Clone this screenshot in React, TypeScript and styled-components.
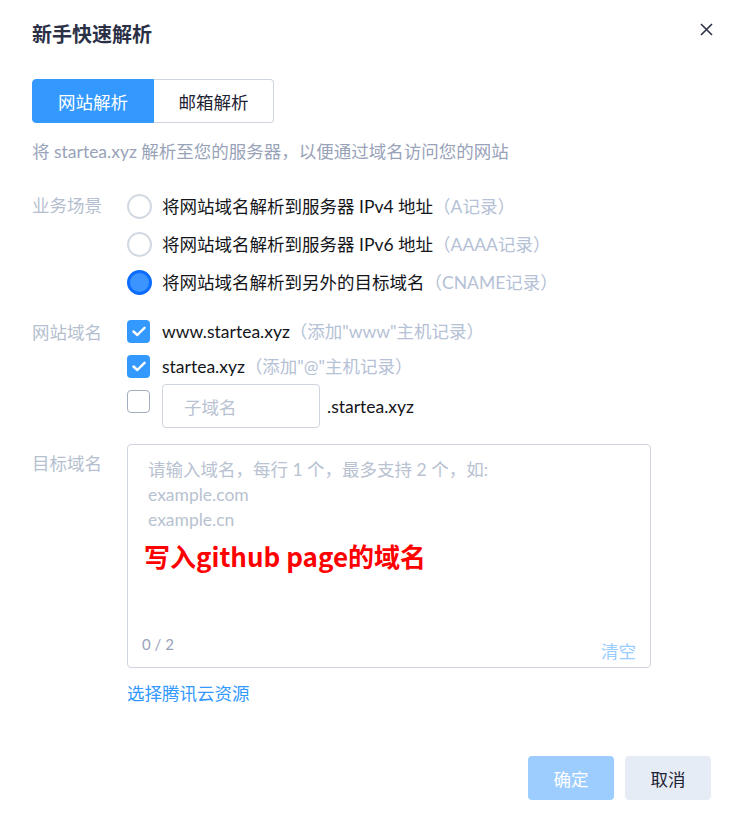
import React from "react";
import styled, { createGlobalStyle } from "styled-components";

const Global = createGlobalStyle`
  html, body { margin: 0; padding: 0; background: #fff; }
  body { font-family: Lato, "Noto Sans CJK SC", sans-serif; -webkit-font-smoothing: antialiased; }
  * { box-sizing: border-box; }
`;

const Dialog = styled.div`
  width: 734px;
  height: 818px;
  background: #fff;
  padding: 20px 23px 0 32px;
  display: flex;
  flex-direction: column;
  font-size: 17.5px;
  color: #13151a;
`;

const Header = styled.div`
  display: flex;
  justify-content: space-between;
  align-items: center;
  height: 28px;
`;

const Title = styled.h1`
  margin: 0;
  font-size: 20px;
  line-height: 28px;
  font-weight: 700;
  color: #2b3046;
  font-family: "Noto Sans CJK SC", sans-serif;
`;

const Close = styled.button`
  width: 24px;
  height: 24px;
  border: 0;
  background: none;
  padding: 0;
  margin-top: -10px;
  margin-right: -7px;
  display: flex;
  align-items: center;
  justify-content: center;
`;

const Tabs = styled.div`
  display: flex;
  margin-top: 31px;
  height: 44px;
`;

const Tab = styled.div<{ $active?: boolean }>`
  width: ${(p) => (p.$active ? 122 : 120)}px;
  display: flex;
  align-items: center;
  justify-content: center;
  font-family: "Noto Sans CJK SC", sans-serif;
  background: ${(p) => (p.$active ? "#3399ff" : "#fff")};
  color: ${(p) => (p.$active ? "#fff" : "#1e2334")};
  border: 1px solid ${(p) => (p.$active ? "#3399ff" : "#cfd5de")};
  border-left-width: ${(p) => (p.$active ? 1 : 0)}px;
  border-radius: ${(p) => (p.$active ? "4px 0 0 4px" : "0 4px 4px 0")};
`;

const Desc = styled.p`
  margin: 16px 0 0;
  line-height: 25px;
  color: #98a3b9;
`;

const FormItem = styled.div<{ $mt: number }>`
  display: flex;
  margin-top: ${(p) => p.$mt}px;
`;

const Label = styled.div<{ $pt?: number }>`
  width: 95px;
  flex: none;
  color: #b5bfcf;
  padding-top: ${(p) => p.$pt ?? 0}px;
  font-family: "Noto Sans CJK SC", sans-serif;
  line-height: 25px;
`;

const Controls = styled.div`
  display: flex;
  flex-direction: column;
  flex: 1;
`;

const OptionRow = styled.label<{ $h: number }>`
  display: flex;
  align-items: center;
  height: ${(p) => p.$h}px;
  line-height: 25px;
`;

const Radio = styled.span<{ $checked?: boolean }>`
  width: 25px;
  height: 25px;
  flex: none;
  border-radius: 50%;
  margin-right: 10px;
  border: ${(p) => (p.$checked ? "3px solid #0b6cff" : "2px solid #d3d9e2")};
  background: ${(p) => (p.$checked ? "#3c94ff" : "#fff")};
`;

const Check = styled.span<{ $checked?: boolean }>`
  width: 23px;
  height: 23px;
  flex: none;
  border-radius: 4px;
  margin-right: 12px;
  display: flex;
  align-items: center;
  justify-content: center;
  background: ${(p) => (p.$checked ? "#3399ff" : "#fff")};
  border: ${(p) => (p.$checked ? "none" : "1.5px solid #a3adc0")};
`;

const Muted = styled.span`
  color: #b5c1d5;
`;

const SubRow = styled.div`
  display: flex;
  align-items: center;
  height: 44px;
`;

const CheckTop = styled.div`
  align-self: flex-start;
  margin-top: 6px;
  display: flex;
`;

const SubInput = styled.div`
  width: 158px;
  height: 44px;
  border: 1px solid #cfd5de;
  border-radius: 4px;
  padding-left: 21px;
  display: flex;
  align-items: center;
  color: #b8c2d1;
  font-family: "Noto Sans CJK SC", sans-serif;
  margin-right: 7px;
`;

const TextBox = styled.div`
  position: relative;
  width: 524px;
  height: 224px;
  border: 1px solid #cfd5de;
  border-radius: 4px;
  display: flex;
  flex-direction: column;
  padding: 12px 14px 4px 20px;
`;

const Placeholder = styled.div`
  flex: 1;
  color: #b8c2d1;
  line-height: 25px;
  white-space: pre-line;
`;

const Annotation = styled.div`
  position: absolute;
  left: 16px;
  top: 94px;
  color: #ff0000;
  font-weight: 700;
  font-size: 26px;
  line-height: 34px;
  font-family: "Noto Sans CJK SC", sans-serif;
`;

const BoxFooter = styled.div`
  display: flex;
  justify-content: space-between;
  align-items: flex-end;
  margin-left: -6px;
`;

const Count = styled.span`
  color: #98a3b9;
  font-size: 15px;
  line-height: 20px;
  margin-bottom: 9px;
`;

const Clear = styled.span`
  color: #99ccff;
  line-height: 25px;
  font-family: "Noto Sans CJK SC", sans-serif;
`;

const Link = styled.a`
  display: block;
  margin-top: 12px;
  color: #3399ff;
  line-height: 25px;
  font-family: "Noto Sans CJK SC", sans-serif;
  text-decoration: none;
`;

const Footer = styled.div`
  display: flex;
  justify-content: flex-end;
  gap: 11px;
  margin-top: auto;
  margin-bottom: 18px;
`;

const Button = styled.button<{ $primary?: boolean }>`
  width: 86px;
  height: 44px;
  border: 0;
  border-radius: 4px;
  font-size: 17.5px;
  font-family: "Noto Sans CJK SC", sans-serif;
  background: ${(p) => (p.$primary ? "#9dcdfe" : "#e5ecf5")};
  color: ${(p) => (p.$primary ? "#fff" : "#1e2334")};
`;

const Tick = () => (
  <svg width="14" height="11" viewBox="0 0 14 11">
    <path d="M1.5 5.5 L5.3 9 L12.5 1.8" fill="none" stroke="#fff" strokeWidth="2.4" strokeLinecap="round" strokeLinejoin="round" />
  </svg>
);

export default function App() {
  return (
    <>
      <Global />
      <Dialog>
        <Header>
          <Title>新手快速解析</Title>
          <Close aria-label="close">
            <svg width="13" height="13" viewBox="0 0 13 13">
              <path d="M1 1 L12 12 M12 1 L1 12" stroke="#2c3149" strokeWidth="1.6" />
            </svg>
          </Close>
        </Header>
        <Tabs>
          <Tab $active>网站解析</Tab>
          <Tab>邮箱解析</Tab>
        </Tabs>
        <Desc>将 startea.xyz 解析至您的服务器，以便通过域名访问您的网站</Desc>

        <FormItem $mt={23}>
          <Label $pt={5}>业务场景</Label>
          <Controls>
            <OptionRow $h={38}>
              <Radio />
              将网站域名解析到服务器 IPv4 地址<Muted>（A记录）</Muted>
            </OptionRow>
            <OptionRow $h={38}>
              <Radio />
              将网站域名解析到服务器 IPv6 地址<Muted>（AAAA记录）</Muted>
            </OptionRow>
            <OptionRow $h={38}>
              <Radio $checked />
              将网站域名解析到另外的目标域名<Muted>（CNAME记录）</Muted>
            </OptionRow>
          </Controls>
        </FormItem>

        <FormItem $mt={13}>
          <Label $pt={5}>网站域名</Label>
          <Controls>
            <OptionRow $h={35}>
              <Check $checked><Tick /></Check>
              www.startea.xyz<Muted>（添加"www"主机记录）</Muted>
            </OptionRow>
            <OptionRow $h={35}>
              <Check $checked><Tick /></Check>
              startea.xyz<Muted>（添加"@"主机记录）</Muted>
            </OptionRow>
            <SubRow>
              <CheckTop><Check /></CheckTop>
              <SubInput>子域名</SubInput>
              .startea.xyz
            </SubRow>
          </Controls>
        </FormItem>

        <FormItem $mt={16}>
          <Label $pt={6}>目标域名</Label>
          <Controls>
            <TextBox>
              <Placeholder>{"请输入域名，每行 1 个，最多支持 2 个，如:\nexample.com\nexample.cn"}</Placeholder>
              <Annotation>写入github page的域名</Annotation>
              <BoxFooter>
                <Count>0 / 2</Count>
                <Clear>清空</Clear>
              </BoxFooter>
            </TextBox>
            <Link>选择腾讯云资源</Link>
          </Controls>
        </FormItem>

        <Footer>
          <Button $primary>确定</Button>
          <Button>取消</Button>
        </Footer>
      </Dialog>
    </>
  );
}
